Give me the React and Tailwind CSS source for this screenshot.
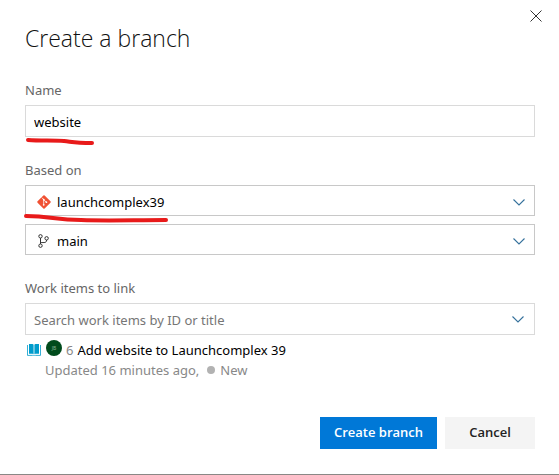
import React from "react";

function Chevron() {
  return (
    <svg viewBox="0 0 12 7" className="h-[7px] w-3" fill="none" stroke="#35719c" strokeWidth="1.1">
      <path d="M0.5 0.5 L6 6 L11.5 0.5" />
    </svg>
  );
}

function GitLogo() {
  return (
    <svg viewBox="0 0 14 14" className="size-3.5">
      <rect x="2" y="2" width="10" height="10" rx="0.9" fill="#f05133" transform="rotate(45 7 7)" />
      <path d="M4.8 2.6 L6.7 4.5 V9.6 M6.7 4.6 L9.3 7.2" fill="none" stroke="#fff" strokeWidth="0.8" />
      <circle cx="6.7" cy="4.6" r="0.9" fill="#fff" />
      <circle cx="6.7" cy="9.8" r="0.9" fill="#fff" />
      <circle cx="9.4" cy="7.2" r="0.9" fill="#fff" />
    </svg>
  );
}

function BranchIcon() {
  return (
    <svg viewBox="0 0 14 14" className="size-3.5" fill="none" stroke="#333" strokeWidth="1">
      <circle cx="3.5" cy="2.3" r="1.7" />
      <circle cx="3.5" cy="11.7" r="1.7" />
      <circle cx="9.6" cy="4.3" r="1.7" />
      <path d="M3.5 4 V10 M9.6 6 C9.6 9.2 7 8.5 3.5 8.5" />
    </svg>
  );
}

function BookIcon() {
  return (
    <svg viewBox="0 0 14 12" className="h-3 w-3.5">
      <path d="M2 0 H5.4 Q6.6 0 6.6 1 V10.4 Q6.2 9.8 5.4 9.8 H2 Z M12 0 H8.6 Q7.4 0 7.4 1 V10.4 Q7.8 9.8 8.6 9.8 H12 Z" fill="#009ccc" />
      <path d="M0.5 1 V11.4 H5.6 L7 12 L8.4 11.4 H13.5 V1" fill="none" stroke="#009ccc" strokeWidth="0.8" />
    </svg>
  );
}

function Stroke({ d, viewBox, className }) {
  return (
    <svg viewBox={viewBox} className={`pointer-events-none absolute ${className}`} fill="none" stroke="#e81a1a" strokeWidth="4" strokeLinecap="round" strokeLinejoin="round">
      <path d={d} />
    </svg>
  );
}

function Picker({ label, value, icon }) {
  return (
    <div className="relative">
      <select aria-label={label} defaultValue={value} className="block h-[31px] w-full appearance-none border border-[#c8c8c8] bg-white pt-0.5 pr-8 pl-[31px] text-black">
        <option>{value}</option>
      </select>
      <span className="pointer-events-none absolute inset-y-0 left-3 flex items-center pt-[3px]">{icon}</span>
      <span className="pointer-events-none absolute inset-y-0 right-2.5 flex items-center pt-1"><Chevron /></span>
    </div>
  );
}

export default function App() {
  return (
    <main className="relative border-b border-[#8a8886] bg-white px-6 pt-[22px] pb-[25px] pl-[25px] font-['Noto_Sans','Open_Sans',sans-serif] text-[13px] leading-5 text-[#666]">
      <button type="button" aria-label="Close" className="absolute top-2.5 right-[17px] flex size-3">
        <svg viewBox="0 0 12 12" className="size-3" fill="none" stroke="#333" strokeWidth="1">
          <path d="M0.5 0.5 L11.5 11.5 M11.5 0.5 L0.5 11.5" />
        </svg>
      </button>
      <h1 className="mb-[26px] font-['Open_Sans',sans-serif] text-[23px] leading-8 font-light text-[#111]">Create a branch</h1>
      <form className="flex flex-col gap-[23px]" onSubmit={(e) => e.preventDefault()}>
        <div className="flex flex-col gap-[5px]">
          <label htmlFor="name">Name</label>
          <div className="relative">
            <input id="name" defaultValue="website" className="block h-8 w-full border border-[#dadada] px-2 pt-0.5 text-black outline-none" />
            <Stroke viewBox="0 0 72 10" className="top-[31px] left-0 h-2.5 w-[72px]" d="M3 4 C16 5 29 4 39 5 C48 6 50 7 67 7" />
          </div>
        </div>
        <fieldset>
          <legend className="mb-[5px]">Based on</legend>
          <div className="relative flex flex-col gap-2">
            <Picker label="Repository" value="launchcomplex39" icon={<GitLogo />} />
            <Picker label="Branch" value="main" icon={<BranchIcon />} />
            <Stroke viewBox="0 0 146 12" className="top-[27px] -left-0.5 h-3 w-[146px]" d="M3 4 C28 4 32 8 58 8 C85 9 110 8 143 8" />
          </div>
        </fieldset>
        <div className="flex flex-col">
          <label htmlFor="items" className="mb-[5px]">Work items to link</label>
          <div className="relative mb-[5px]">
            <input id="items" placeholder="Search work items by ID or title" className="block h-8 w-full border border-[#dadada] pt-0.5 pr-8 pl-2 outline-none placeholder:text-[#767676]" />
            <button type="button" aria-label="Show work items" className="absolute inset-y-0 right-[11px] flex items-center"><Chevron /></button>
          </div>
          <div className="flex items-center">
            <span className="mr-[5px] ml-0.5"><BookIcon /></span>
            <span className="mr-1 flex size-4 -translate-y-0.5 items-center justify-center rounded-full bg-[#004b1c] text-[5px] text-[#8ab598]">JB</span>
            <span className="mr-1 text-[#888]">6</span>
            <a href="#item" className="text-black">Add website to Launchcomplex 39</a>
          </div>
          <div className="flex items-center pl-5 text-[#888]">
            Updated 16 minutes ago,
            <span className="mr-[5px] ml-2 size-2 rounded-full bg-[#b2b2b2]" />
            New
          </div>
        </div>
        <div className="mt-3.5 flex justify-end gap-2 font-['Open_Sans',sans-serif] font-semibold">
          <button type="submit" className="h-8 w-[117px] bg-[#0078d7] pb-0.5 text-white">Create branch</button>
          <button type="button" className="h-8 w-[90px] bg-[#f4f4f4] pb-0.5 text-[#222]">Cancel</button>
        </div>
      </form>
    </main>
  );
}
